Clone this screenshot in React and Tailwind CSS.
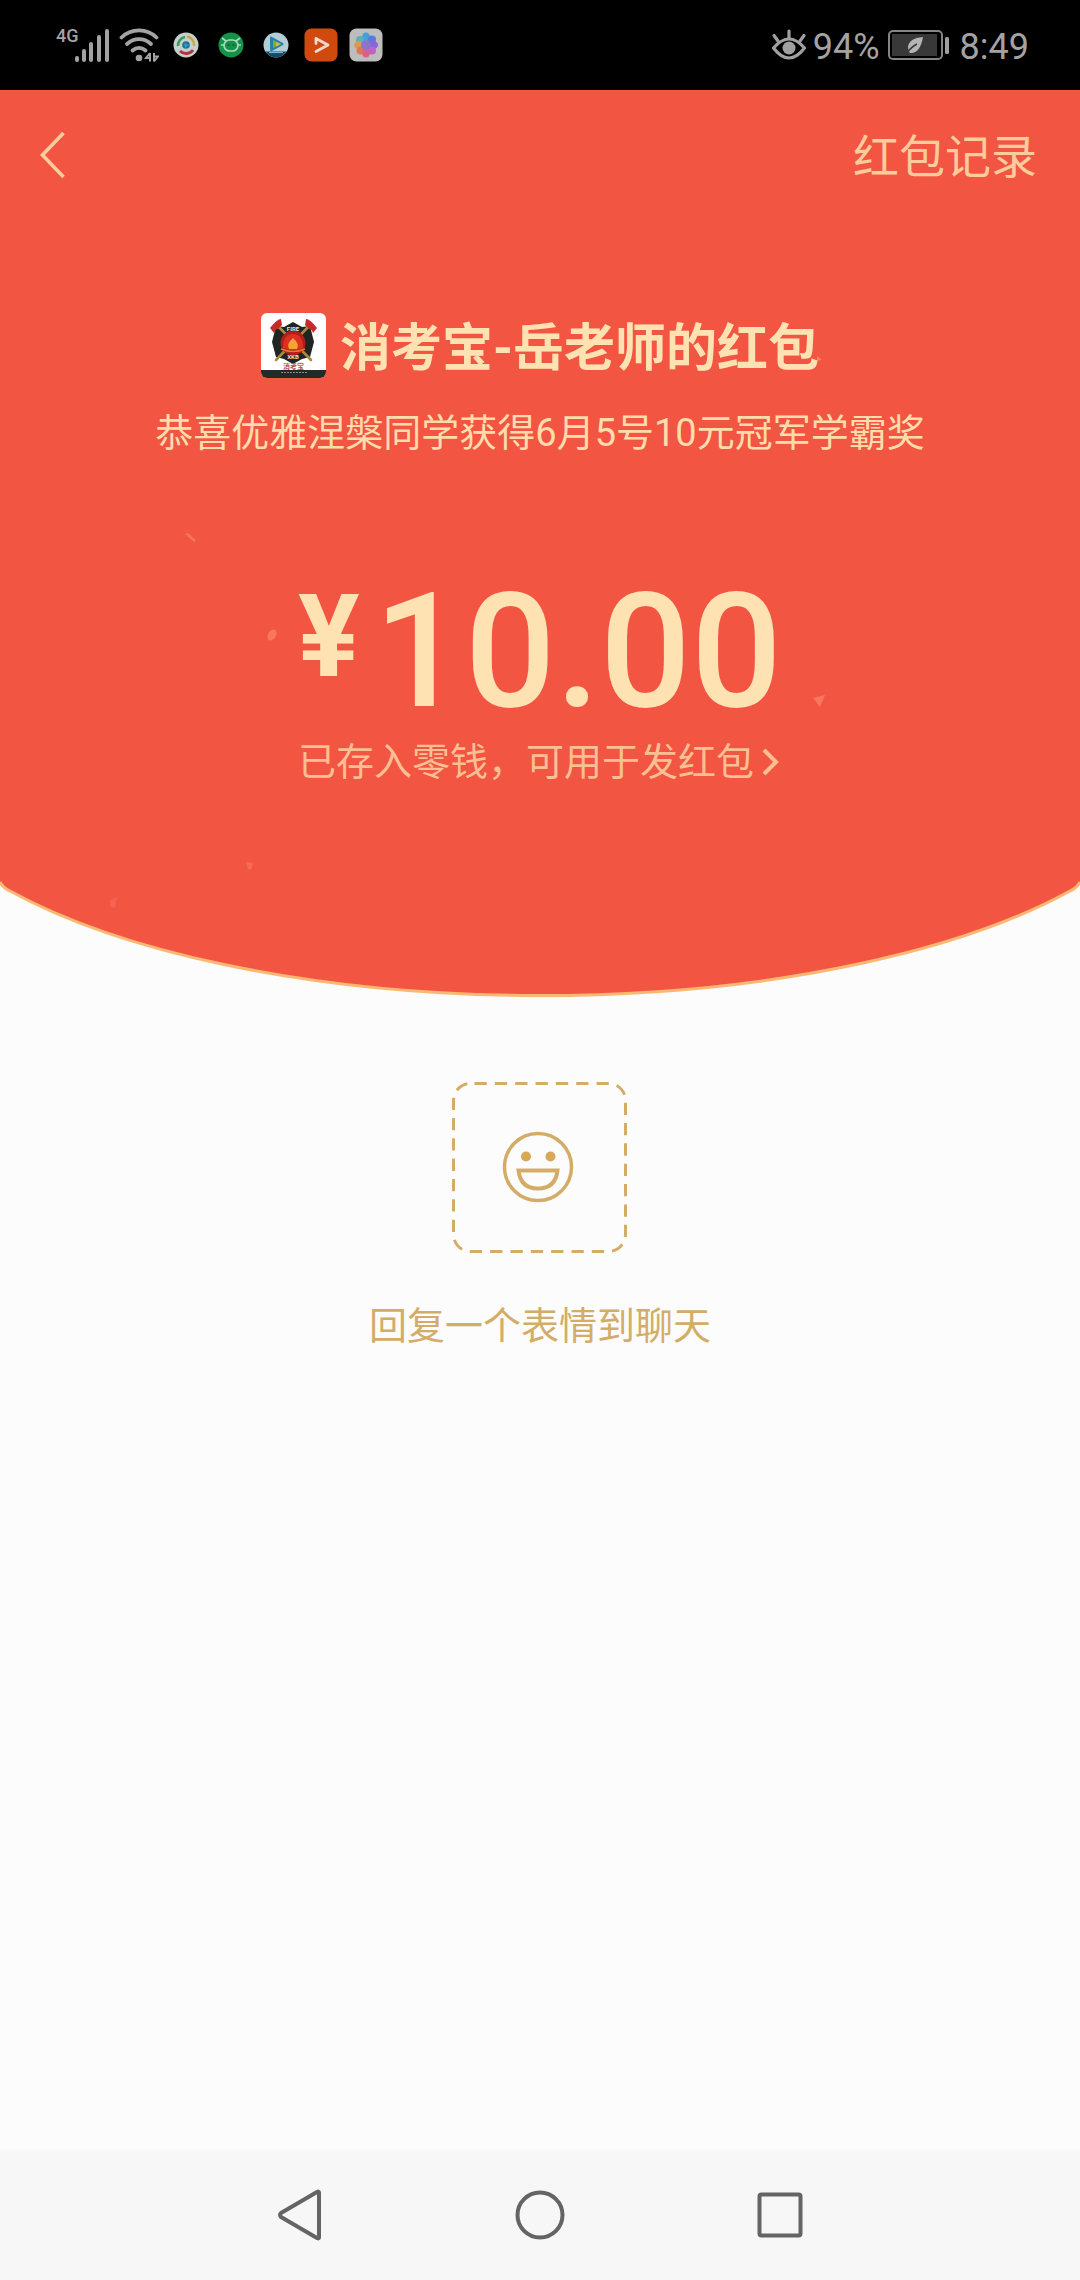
import React from "react";

function SignalIcon() {
  return (
    <svg className="w-9 h-9" viewBox="0 0 36 36" fill="#a3a3a3" aria-hidden="true">
      <rect x="1" y="29" width="4" height="6" rx="2" />
      <rect x="8" y="22" width="4" height="13" rx="2" />
      <rect x="15" y="15" width="4" height="20" rx="2" />
      <rect x="23" y="8" width="4" height="27" rx="2" />
      <rect x="31" y="2" width="4" height="33" rx="2" />
    </svg>
  );
}

function WifiIcon() {
  return (
    <svg className="w-10 h-9" viewBox="0 0 40 36" fill="none" stroke="#a3a3a3" strokeWidth="3.8" strokeLinecap="round" aria-hidden="true">
      <path d="M2.500 10.500C12 1 28 1 37.500 10.500" />
      <path d="M8 17C15 10.500 25 10.500 32 17" />
      <path d="M13.500 23.500C17.500 20 22.500 20 26.500 23.500" />
      <circle cx="20" cy="31" r="3.300" fill="#a3a3a3" stroke="none" />
      <path d="M31 26v8.500M31 26l-4 5h3M35 34.500V26M35 34.500l4-5h-3" strokeWidth="2" strokeLinecap="butt" />
    </svg>
  );
}

function BrowserIcon() {
  return (
    <svg className="w-[26px] h-[26px]" viewBox="0 0 26 26" fill="none" aria-hidden="true">
      <circle cx="13" cy="13" r="12.500" fill="#c4d0cc" />
      <path d="M5 14A8.500 8.500 0 0 1 12 5" stroke="#3c9a58" strokeWidth="2.500" />
      <path d="M14 4.500A8.500 8.500 0 0 1 21 14" stroke="#c9a843" strokeWidth="2.500" />
      <path d="M20 18A8.500 8.500 0 0 1 7 19" stroke="#b33340" strokeWidth="3" />
      <circle cx="13" cy="13" r="3.800" fill="#1d6ea8" />
      <path d="M11 11l5 2-4 3z" fill="#2fa0a8" />
    </svg>
  );
}

function GreenAppIcon() {
  return (
    <svg className="w-[26px] h-[26px]" viewBox="0 0 26 26" fill="none" aria-hidden="true">
      <circle cx="13" cy="13" r="12.500" fill="#15924a" />
      <rect x="6" y="8" width="14" height="11" rx="5.500" stroke="#a9dcb9" strokeWidth="1.600" />
      <path d="M4 6l4 3M22 6l-4 3M3 13h3M20 13h3" stroke="#a9dcb9" strokeWidth="1.600" />
      <path d="M9.500 13h2M14.500 13h2" stroke="#0a5c2c" strokeWidth="1.600" />
    </svg>
  );
}

function VideoAppIcon() {
  return (
    <svg className="w-[26px] h-[26px]" viewBox="0 0 26 26" fill="none" aria-hidden="true">
      <circle cx="13" cy="13" r="12.500" fill="#b4cdd8" />
      <path d="M7 5.500Q7 4 9 5l11 6q1.500 1 0 2L9 19q-2 .5-2-1z" fill="#2583a8" />
      <path d="M10 8l8 4-8 4z" fill="#86a93a" />
      <path d="M13 10l5 2-5 2.500z" fill="#d3b94a" />
      <path d="M2.500 19.500h21A12.500 12.500 0 0 1 2.500 19.500z" fill="#0e4a66" />
      <path d="M6 20.500h14" stroke="#7fb4c9" strokeWidth="1.200" />
    </svg>
  );
}

function PlayerAppIcon() {
  return (
    <svg className="w-[34px] h-[34px]" viewBox="0 0 34 34" fill="none" aria-hidden="true">
      <rect x=".5" y=".5" width="33" height="33" rx="7" fill="#d04a10" />
      <path d="M12 15.500V10.500l12 6.500-12 6.500" stroke="#f0d9cf" strokeWidth="2.800" strokeLinecap="round" strokeLinejoin="round" />
    </svg>
  );
}

function GalleryAppIcon() {
  return (
    <svg className="w-[34px] h-[34px]" viewBox="0 0 34 34" aria-hidden="true">
      <rect x=".5" y=".5" width="33" height="33" rx="7" fill="#bdbdbd" />
      <ellipse cx="17" cy="9" rx="4" ry="4.500" fill="#3fa3d8" />
      <ellipse cx="11" cy="12" rx="4" ry="4" fill="#5cb0b8" />
      <ellipse cx="23" cy="11.500" rx="4" ry="4" fill="#5c78dc" />
      <ellipse cx="9.500" cy="17" rx="4.500" ry="4" fill="#d99a55" />
      <ellipse cx="24.500" cy="17" rx="4.500" ry="4" fill="#8a63d8" />
      <ellipse cx="11.500" cy="22.500" rx="4" ry="4" fill="#e0784f" />
      <ellipse cx="23" cy="22.500" rx="4" ry="4" fill="#bd62cc" />
      <ellipse cx="17" cy="25" rx="4" ry="4.500" fill="#dc5f86" />
      <circle cx="17" cy="17" r="5" fill="#8c74cc" />
    </svg>
  );
}

function EyeIcon() {
  return (
    <svg className="w-9 h-8" viewBox="0 0 36 32" fill="none" stroke="#a0a0a0" strokeWidth="3.2" strokeLinecap="round" aria-hidden="true">
      <path d="M2.500 19Q18 1 33.500 19 18 39 2.500 19z" strokeLinejoin="round" />
      <circle cx="18" cy="19" r="6.500" fill="#a0a0a0" stroke="none" />
      <path d="M18 9V2M7 12L3 6.500M29 12l4-5.500" />
    </svg>
  );
}

function BatteryIcon() {
  return (
    <svg className="w-[62px] h-[30px]" viewBox="0 0 62 30" fill="none" aria-hidden="true">
      <rect x="1" y="1" width="53" height="28" rx="4" stroke="#858585" strokeWidth="2" />
      <rect x="4" y="4" width="45" height="22" fill="#383838" />
      <rect x="57" y="7" width="4" height="17" rx="1.500" fill="#a0a0a0" />
      <path d="M35 7q-14 1-15 10 0 4 2 6 10 1 13-16z" fill="#b5b5b5" />
      <path d="M19 23q4-6 10-9" stroke="#383838" strokeWidth="1.500" />
    </svg>
  );
}

function Avatar() {
  return (
    <svg className="w-[65px] h-[65px] shrink-0 rounded-md" viewBox="0 0 65 65" role="img" aria-label="消考宝">
      <rect width="65" height="65" fill="#fff" />
      <rect y="57" width="65" height="8" fill="#232b28" />
      <path d="M32 9l9 5 8-1 4 16-4 15-8 2-9 5-9-5-8-2-4-15 4-16 8 1z" fill="#1f2520" />
      <path d="M15 11l35 36M50 11L15 47" stroke="#a98a42" strokeWidth="2.600" strokeLinecap="round" />
      <path d="M20 6q-4 0-11 9l4 5q1-4 4-4l4-4zM45 6q4 0 11 9l-4 5q-1-4-4-4l-4-4z" fill="#c42b2b" />
      <circle cx="32" cy="30" r="12.500" fill="#b31d1b" />
      <path d="M22 35q0-14 10-14t10 14q-10 4-20 0z" fill="#dc3120" />
      <path d="M32 25q7 6 4 11h-8q-3-5 4-11z" fill="#f4a33a" />
      <path d="M20 36q12 5 24 0" stroke="#e07b2e" strokeWidth="1.500" fill="none" />
      <text x="32" y="17.500" textAnchor="middle" fontSize="6" fontWeight="700" fill="#e9e4d4" fontFamily="Roboto, sans-serif">FIRE</text>
      <text x="32" y="46" textAnchor="middle" fontSize="6" fontWeight="700" fill="#e9e4d4" fontFamily="Roboto, sans-serif">XKB</text>
      <text x="32.500" y="56" textAnchor="middle" fontSize="7" fontWeight="700" fill="#c1505c" fontFamily="'Noto Sans CJK SC', sans-serif">消考宝</text>
      <path d="M20 59.500h26" stroke="#8a8f8c" strokeWidth="1" strokeDasharray="2 1" />
    </svg>
  );
}

function StatusBar() {
  return (
    <div className="flex h-[90px] items-center justify-between bg-black pl-14 pr-[51px] text-[#a3a3a3]">
      <div className="flex items-center">
        <span className="w-[18px] self-start text-[18px] leading-[18px] font-medium">4G</span>
        <SignalIcon />
        <div className="ml-[9px] mr-[14px] flex"><WifiIcon /></div>
        <div className="flex items-center gap-[19px]">
          <BrowserIcon />
          <GreenAppIcon />
          <VideoAppIcon />
        </div>
        <div className="ml-[15px] flex items-center gap-[11px]">
          <PlayerAppIcon />
          <GalleryAppIcon />
        </div>
      </div>
      <div className="flex items-center text-[36px] leading-9">
        <EyeIcon />
        <span className="ml-[6px] mr-2 pt-1">94%</span>
        <BatteryIcon />
        <span className="ml-[10px] pt-1">8:49</span>
      </div>
    </div>
  );
}

function Confetti() {
  return (
    <svg className="pointer-events-none absolute inset-0 h-full w-full opacity-80" viewBox="0 90 1080 910" preserveAspectRatio="none" aria-hidden="true">
      <path d="M185 534l3-1 8 7-2 2z" fill="#fa786b" />
      <ellipse cx="272" cy="635" rx="4" ry="6" transform="rotate(30 272 635)" fill="#fa8069" />
      <path d="M813 698l12-3-5 12z" fill="#fa8068" />
      <path d="M246 862l7 1-2 7-3-1z" fill="#fa6f60" />
      <path d="M110 900l7-3-2 11-5-1z" fill="#f86454" />
      <path d="M817 356l5 4-5 1z" fill="#fa8a70" />
    </svg>
  );
}

function Curve() {
  return (
    <svg className="block h-[120px] w-full" viewBox="0 880 1080 120" preserveAspectRatio="none" aria-hidden="true">
      <path d="M0 879V882Q3 888 10 891A640 238 0 0 0 1070 891Q1077 888 1080 882V879z" fill="#f25542" />
      <path d="M0 882Q3 888 10 891A640 238 0 0 0 1070 891Q1077 888 1080 882" fill="none" stroke="#f9b873" strokeWidth="3" />
    </svg>
  );
}

function Envelope() {
  return (
    <section className="relative">
      <div className="h-[790px] bg-[#f25542] text-[#ffe2b1]">
        <header className="flex h-[130px] items-center justify-between pl-[31px] pr-[43px] text-[#fdcb9c]">
          <button type="button" aria-label="返回" className="p-2">
            <svg className="h-[46px] w-[26px]" viewBox="0 0 26 46" fill="none" stroke="currentColor" strokeWidth="3.6" aria-hidden="true">
              <path d="M24.500 1L3.500 23l21 22" />
            </svg>
          </button>
          <button type="button" className="pt-1 text-[46px] leading-[56px]">红包记录</button>
        </header>
        <div className="flex flex-col items-center pt-[87px]">
          <div className="flex items-center gap-[14px]">
            <Avatar />
            <h1 className="pt-2 text-[51px] leading-[68px] font-bold">消考宝-岳老师的红包</h1>
          </div>
          <p className="mt-[22px] text-[38px] leading-[56px] text-[#ffdcab]">恭喜优雅涅槃同学获得6月5号10元冠军学霸奖</p>
          <div className="mt-[108px] flex items-start gap-[14px]">
            <span className="text-[115px] leading-[136px] font-bold">¥</span>
            <span className="text-[160px] leading-[166px] font-medium">10.00</span>
          </div>
          <a href="#balance" className="flex items-center gap-2 text-[38px] leading-[54px] text-[#fcbf93]">
            已存入零钱，可用于发红包
            <svg className="h-7 w-5" viewBox="0 0 20 28" fill="none" stroke="currentColor" strokeWidth="4" aria-hidden="true">
              <path d="M2 2l12 12L2 26" />
            </svg>
          </a>
        </div>
      </div>
      <Curve />
      <Confetti />
    </section>
  );
}

function Reply() {
  return (
    <section className="flex grow flex-col items-center pt-[81px] text-[#d3ad68]">
      <button type="button" className="flex flex-col items-center gap-[42px]">
        <svg className="h-[173px] w-[177px]" viewBox="0 0 177 173" fill="none" stroke="currentColor" strokeWidth="3" aria-hidden="true">
          <rect x="2.500" y="2.500" width="172" height="168" rx="17" strokeDasharray="12.300 8.040" strokeDashoffset="-4" />
          <circle cx="87" cy="86" r="33.500" strokeWidth="3.500" />
          <circle cx="75" cy="75.500" r="5" fill="#d9a758" stroke="none" />
          <circle cx="99.500" cy="75.500" r="5" fill="#d9a758" stroke="none" />
          <path d="M67.500 89.500h39q-2 18-19.500 18T67.500 89.500z" strokeWidth="4" />
        </svg>
        <span className="text-[38px] leading-[60px]">回复一个表情到聊天</span>
      </button>
    </section>
  );
}

function NavBar() {
  return (
    <nav className="flex h-[130px] items-center justify-center gap-[188px] bg-[#f7f7f7]">
      <button type="button" aria-label="后退">
        <svg className="size-[52px]" viewBox="0 0 52 52" fill="none" stroke="#646464" strokeWidth="4" strokeLinejoin="round" aria-hidden="true">
          <path d="M45 3.500v45q0 1.500-2 .5L7 28q-2-2 0-4L43 3q2-1 2 .5z" />
        </svg>
      </button>
      <button type="button" aria-label="主页">
        <svg className="size-[52px]" viewBox="0 0 52 52" fill="none" stroke="#646464" strokeWidth="4" aria-hidden="true">
          <circle cx="26" cy="26" r="22.500" />
        </svg>
      </button>
      <button type="button" aria-label="最近任务">
        <svg className="size-[52px]" viewBox="0 0 52 52" fill="none" stroke="#646464" strokeWidth="4" aria-hidden="true">
          <rect x="5.500" y="5.500" width="41" height="41" rx="2" />
        </svg>
      </button>
    </nav>
  );
}

export default function App() {
  return (
    <main className="flex min-h-screen flex-col bg-[#fcfcfc] font-['Roboto','Noto_Sans_CJK_SC',sans-serif]">
      <StatusBar />
      <Envelope />
      <Reply />
      <NavBar />
    </main>
  );
}
